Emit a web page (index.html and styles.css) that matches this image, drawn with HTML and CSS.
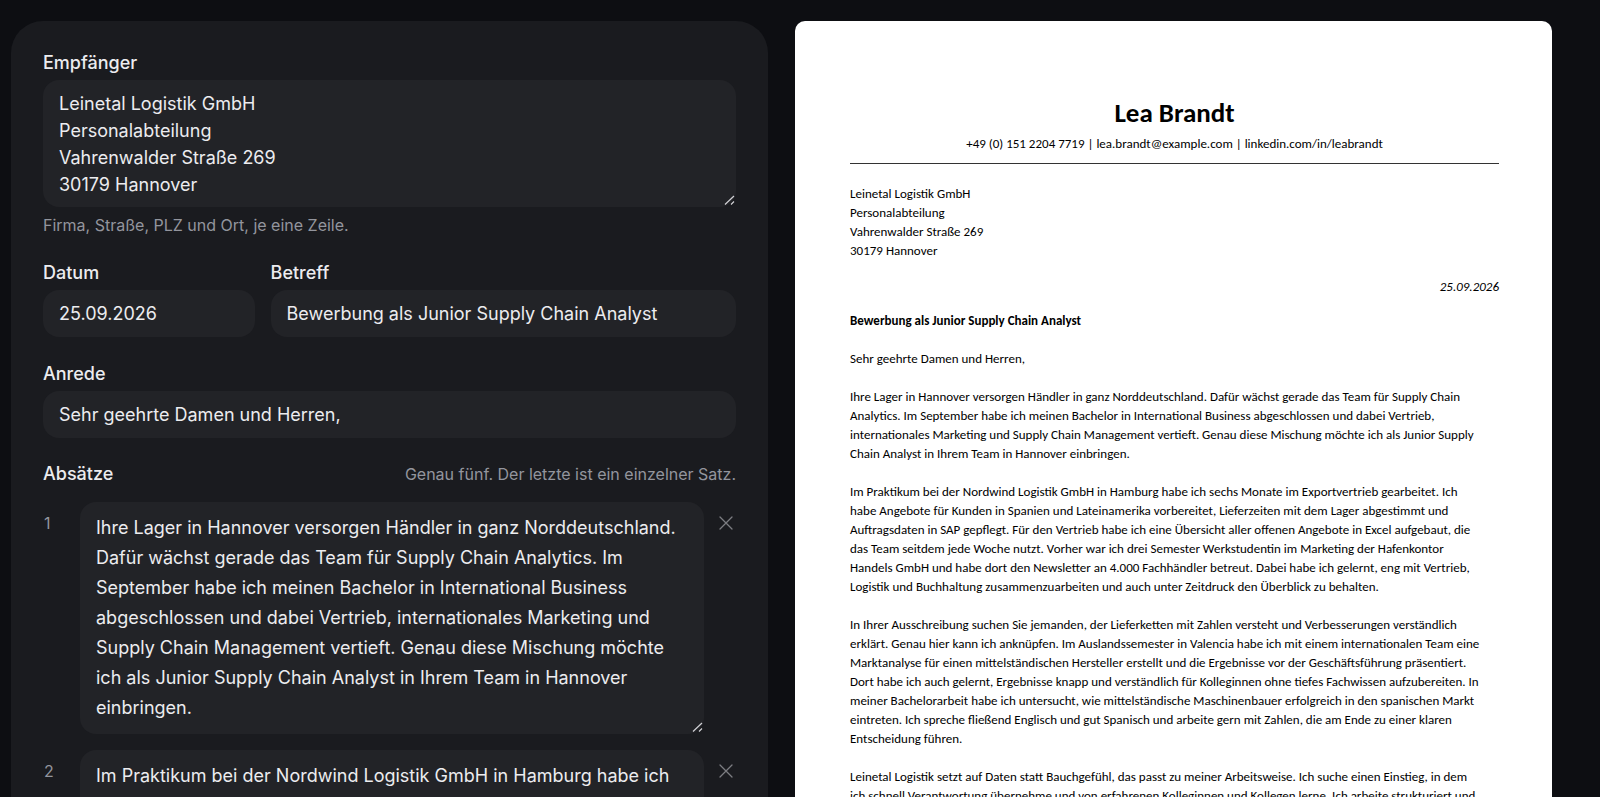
FILE: index.html
```
<!DOCTYPE html>
<html lang="de">
<head>
  <meta charset="UTF-8" />
  <meta name="viewport" content="width=device-width, initial-scale=1" />
  <title>Anschreiben bearbeiten</title>
  <link rel="stylesheet" href="styles.css">
</head>
<body>

  <main class="editor">
    <form class="panel">
      <div class="field">
        <label for="empfaenger">Empfänger</label>
        <textarea id="empfaenger" class="address" rows="4" wrap="off">Leinetal Logistik GmbH
Personalabteilung
Vahrenwalder Straße 269
30179 Hannover</textarea>
        <p class="hint">Firma, Straße, PLZ und Ort, je eine Zeile.</p>
      </div>

      <div class="row">
        <div class="field">
          <label for="datum">Datum</label>
          <input type="text" id="datum" value="25.09.2026">
        </div>
        <div class="field">
          <label for="betreff">Betreff</label>
          <input type="text" id="betreff" value="Bewerbung als Junior Supply Chain Analyst">
        </div>
      </div>

      <div class="field">
        <label for="anrede">Anrede</label>
        <input type="text" id="anrede" value="Sehr geehrte Damen und Herren,">
      </div>

      <div class="paragraphs">
        <div class="paragraphs-head">
          <h2>Absätze</h2>
          <p class="hint">Genau fünf. Der letzte ist ein einzelner Satz.</p>
        </div>

        <div class="paragraph">
          <label class="number" for="absatz1">1</label>
          <textarea id="absatz1" rows="7" wrap="off">Ihre Lager in Hannover versorgen Händler in ganz Norddeutschland.
Dafür wächst gerade das Team für Supply Chain Analytics. Im
September habe ich meinen Bachelor in International Business
abgeschlossen und dabei Vertrieb, internationales Marketing und
Supply Chain Management vertieft. Genau diese Mischung möchte
ich als Junior Supply Chain Analyst in Ihrem Team in Hannover
einbringen.</textarea>
          <button type="button" class="remove" aria-label="Absatz 1 entfernen">
            <svg viewBox="0 0 14 14" aria-hidden="true"><path d="M1 1L13 13M13 1L1 13"/></svg>
          </button>
        </div>

        <div class="paragraph">
          <label class="number" for="absatz2">2</label>
          <textarea id="absatz2" rows="7" wrap="off">Im Praktikum bei der Nordwind Logistik GmbH in Hamburg habe ich
sechs Monate im Exportvertrieb gearbeitet. Ich habe Angebote für
Kunden in Spanien und Lateinamerika vorbereitet, Lieferzeiten mit
dem Lager abgestimmt und Auftragsdaten in SAP gepflegt.</textarea>
          <button type="button" class="remove" aria-label="Absatz 2 entfernen">
            <svg viewBox="0 0 14 14" aria-hidden="true"><path d="M1 1L13 13M13 1L1 13"/></svg>
          </button>
        </div>
      </div>
    </form>

    <article class="paper">
      <header>
        <h1>Lea Brandt</h1>
        <p>+49 (0) 151 2204 7719 | lea.brandt@example.com | linkedin.com/in/leabrandt</p>
      </header>

      <address>
        Leinetal Logistik GmbH<br>
        Personalabteilung<br>
        Vahrenwalder Straße 269<br>
        30179 Hannover
      </address>

      <p class="date">25.09.2026</p>
      <p class="subject">Bewerbung als Junior Supply Chain Analyst</p>

      <p>Sehr geehrte Damen und Herren,</p>

      <p>
        Ihre Lager in Hannover versorgen Händler in ganz Norddeutschland. Dafür wächst gerade das Team für Supply Chain<br>
        Analytics. Im September habe ich meinen Bachelor in International Business abgeschlossen und dabei Vertrieb,<br>
        internationales Marketing und Supply Chain Management vertieft. Genau diese Mischung möchte ich als Junior Supply<br>
        Chain Analyst in Ihrem Team in Hannover einbringen.
      </p>

      <p>
        Im Praktikum bei der Nordwind Logistik GmbH in Hamburg habe ich sechs Monate im Exportvertrieb gearbeitet. Ich<br>
        habe Angebote für Kunden in Spanien und Lateinamerika vorbereitet, Lieferzeiten mit dem Lager abgestimmt und<br>
        Auftragsdaten in SAP gepflegt. Für den Vertrieb habe ich eine Übersicht aller offenen Angebote in Excel aufgebaut, die<br>
        das Team seitdem jede Woche nutzt. Vorher war ich drei Semester Werkstudentin im Marketing der Hafenkontor<br>
        Handels GmbH und habe dort den Newsletter an 4.000 Fachhändler betreut. Dabei habe ich gelernt, eng mit Vertrieb,<br>
        Logistik und Buchhaltung zusammenzuarbeiten und auch unter Zeitdruck den Überblick zu behalten.
      </p>

      <p>
        In Ihrer Ausschreibung suchen Sie jemanden, der Lieferketten mit Zahlen versteht und Verbesserungen verständlich<br>
        erklärt. Genau hier kann ich anknüpfen. Im Auslandssemester in Valencia habe ich mit einem internationalen Team eine<br>
        Marktanalyse für einen mittelständischen Hersteller erstellt und die Ergebnisse vor der Geschäftsführung präsentiert.<br>
        Dort habe ich auch gelernt, Ergebnisse knapp und verständlich für Kolleginnen ohne tiefes Fachwissen aufzubereiten. In<br>
        meiner Bachelorarbeit habe ich untersucht, wie mittelständische Maschinenbauer erfolgreich in den spanischen Markt<br>
        eintreten. Ich spreche fließend Englisch und gut Spanisch und arbeite gern mit Zahlen, die am Ende zu einer klaren<br>
        Entscheidung führen.
      </p>

      <p>
        Leinetal Logistik setzt auf Daten statt Bauchgefühl, das passt zu meiner Arbeitsweise. Ich suche einen Einstieg, in dem<br>
        ich schnell Verantwortung übernehme und von erfahrenen Kolleginnen und Kollegen lerne. Ich arbeite strukturiert und
      </p>
    </article>
  </main>

</body>
</html>
```

FILE: styles.css
```
* {
  box-sizing: border-box;
}
body {
  margin: 0;
  background: #0d0e12;
  color: #ececef;
  color-scheme: dark;
  font-family: Inter, sans-serif;
  font-size: 18px;
}
h1, h2, p {
  margin: 0;
}

.editor {
  display: grid;
  grid-template-columns: 1fr 1fr;
  gap: 27px;
  align-items: start;
  padding: 21px 48px 21px 11px;
}

/* form */
.panel {
  display: flex;
  flex-direction: column;
  gap: 24px;
  min-width: 0;
  padding: 29px 32px 32px;
  background: #1a1b1f;
  border-radius: 32px;
}
.field {
  display: flex;
  flex-direction: column;
  min-width: 0;
}
.field label, h2 {
  margin-bottom: 4px;
  font-size: 18px;
  font-weight: 500;
  line-height: 26px;
}
.row {
  display: grid;
  grid-template-columns: 5fr 11fr;
  gap: 16px;
}
input, textarea {
  display: block;
  width: 100%;
  border: 0;
  outline: 0;
  border-radius: 16px;
  background: #222327;
  color: #ececef;
  font: inherit;
}
input {
  height: 47px;
  padding: 0 16px;
}
textarea {
  padding: 11px 16px;
  line-height: 30px;
  overflow: hidden;
  resize: vertical;
}
textarea::-webkit-resizer {
  background: url("data:image/svg+xml,%3Csvg xmlns='http://www.w3.org/2000/svg' width='15' height='15' fill='none' stroke='%23d0d0d4' stroke-width='1.2'%3E%3Cpath d='M4 12.5L13 4M10 12.5L13 9.5'/%3E%3C/svg%3E") no-repeat;
}
.address {
  padding: 10px 16px 9px;
  line-height: 27px;
}
.hint {
  color: #93959d;
  font-size: 16px;
  line-height: 22px;
}
.field .hint {
  margin-top: 7px;
}

.paragraphs {
  display: flex;
  flex-direction: column;
  gap: 16px;
}
.paragraphs-head {
  display: flex;
  justify-content: space-between;
  align-items: center;
}
.paragraphs-head h2 {
  margin: 0;
  line-height: 24px;
}
.paragraph {
  display: grid;
  grid-template-columns: 25px 1fr 20px;
  gap: 12px;
  align-items: start;
}
.number {
  padding: 11px 0 0 1px;
  color: #93959d;
  font-size: 16px;
  line-height: 20px;
}
.remove {
  display: flex;
  align-items: center;
  justify-content: center;
  height: 20px;
  margin-top: 11px;
  padding: 0;
  border: 0;
  background: none;
  cursor: pointer;
}
.remove svg {
  width: 14px;
  height: 14px;
  fill: none;
  stroke: #7c7d82;
  stroke-width: 1.3;
  stroke-linecap: round;
}

/* letter preview */
.paper {
  min-width: 0;
  aspect-ratio: 210 / 297;
  padding: 72px 53px 55px 55px;
  border-radius: 10px;
  background: #fff;
  color: #000;
  font-family: Carlito, Lato, sans-serif;
  font-size: 13px;
  line-height: 19px;
  white-space: nowrap;
}
.paper p {
  margin-bottom: 19px;
}
.paper header {
  margin-bottom: 20px;
  padding-bottom: 10px;
  border-bottom: 1px solid #333;
  text-align: center;
}
.paper header p {
  margin: 0;
}
.paper h1 {
  margin-bottom: 1px;
  font-size: 27px;
  line-height: 40px;
}
.paper address {
  margin-bottom: 17px;
  font-style: normal;
}
.paper .date {
  margin-bottom: 15px;
  font-style: italic;
  text-align: right;
}
.paper .subject {
  font-weight: 700;
}
```
